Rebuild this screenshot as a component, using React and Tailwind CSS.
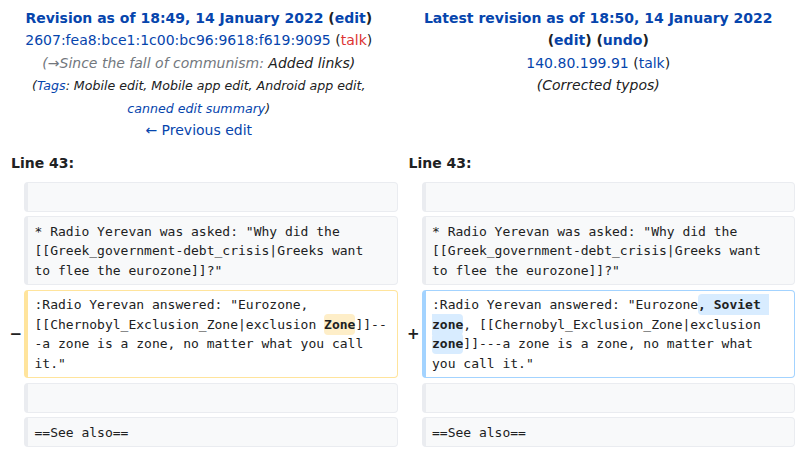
import React from 'react';

const link = 'text-[#0645ad]';

function Box({ kind = 'context', children }) {
  const tone =
    kind === 'del'
      ? 'bg-white border-[#ffe49c]'
      : kind === 'add'
        ? 'bg-white border-[#a3d3ff]'
        : 'bg-[#f8f9fa] border-[#eaecf0]';
  return (
    <div
      className={`rounded-[4px] border border-l-4 ${tone} px-[6.5px] py-[4.25px] font-['DejaVu_Sans_Mono',monospace] text-[13px] leading-[19.5px] text-[#202122] whitespace-pre-wrap break-words`}
    >
      {children}
    </div>
  );
}

function Change({ kind, children }) {
  return (
    <span
      className={`font-bold rounded-[4px] py-[3px] ${kind === 'del' ? 'bg-[#feeec8]' : 'bg-[#d8ecff]'}`}
    >
      {children}
    </span>
  );
}

function Marker({ sign }) {
  return (
    <div className="flex items-center justify-end pr-[2px] font-['DejaVu_Sans',sans-serif] text-[15px] font-bold text-[#202122]">
      {sign}
    </div>
  );
}

export default function App() {
  return (
    <div className="w-[799px] h-[452px] overflow-hidden bg-white font-['DejaVu_Sans',sans-serif] text-[14px] leading-[1.6] text-[#202122]">
      <div className="grid grid-cols-[24px_1fr_24px_1fr] pr-[4px]">
        {/* old revision header */}
        <div className="col-span-2 pt-[7px] text-center">
          <div className="font-bold">
            <span className={link}>Revision as of 18:49, 14 January 2022</span> (
            <span className={link}>edit</span>)
          </div>
          <div>
            <span className={link}>2607:fea8:bce1:1c00:bc96:9618:f619:9095</span> (
            <span className="text-[#d33]">talk</span>)
          </div>
          <div className="italic">
            <span className="text-[#72777d]">(→Since the fall of communism:</span> Added links)
          </div>
          <div>
            <span className="text-[12.6px] italic">
              (<span className={link}>Tags</span>: Mobile edit, Mobile app edit, Android app edit,
              <br />
              <span className={link}>canned edit summary</span>)
            </span>
          </div>
          <div className={link}>← Previous edit</div>
        </div>

        {/* new revision header */}
        <div className="col-span-2 pt-[7px] pl-[4px] text-center">
          <div className="font-bold">
            <span className={link}>Latest revision as of 18:50, 14 January 2022</span>
          </div>
          <div className="font-bold">
            (<span className={link}>edit</span>) (<span className={link}>undo</span>)
          </div>
          <div>
            <span className={link}>140.80.199.91</span> (<span className={link}>talk</span>)
          </div>
          <div className="italic">(Corrected typos)</div>
        </div>

        <div className="col-span-2 pl-[11px] pt-[10.5px] pb-[7.6px] font-bold">Line 43:</div>
        <div className="col-span-2 pl-[11px] pt-[10.5px] pb-[7.6px] font-bold">Line 43:</div>
      </div>

      <div className="grid grid-cols-[24px_1fr_24px_1fr] gap-y-[4.5px] pr-[4px]">
        <div />
        <Box>{' '}</Box>
        <div />
        <Box>{' '}</Box>

        <div />
        <Box>* Radio Yerevan was asked: "Why did the [[Greek_government-debt_crisis|Greeks want{'\n'}to flee the eurozone]]?"</Box>
        <div />
        <Box>* Radio Yerevan was asked: "Why did the [[Greek_government-debt_crisis|Greeks want{'\n'}to flee the eurozone]]?"</Box>

        <Marker sign="−" />
        <Box kind="del">
          :Radio Yerevan answered: "Eurozone, [[Chernobyl_Exclusion_Zone|exclusion <Change kind="del">Zone</Change>]]--{'\n'}-a zone is a zone, no matter what you call{'\n'}it."
        </Box>
        <Marker sign="+" />
        <Box kind="add">
          :Radio Yerevan answered: "Eurozone<Change kind="add">, Soviet zone</Change>, [[Chernobyl_Exclusion_Zone|exclusion <Change kind="add">zone</Change>]]---a zone is a zone, no matter what{'\n'}you call it."
        </Box>

        <div />
        <Box>{' '}</Box>
        <div />
        <Box>{' '}</Box>

        <div />
        <Box>==See also==</Box>
        <div />
        <Box>==See also==</Box>
      </div>
    </div>
  );
}
